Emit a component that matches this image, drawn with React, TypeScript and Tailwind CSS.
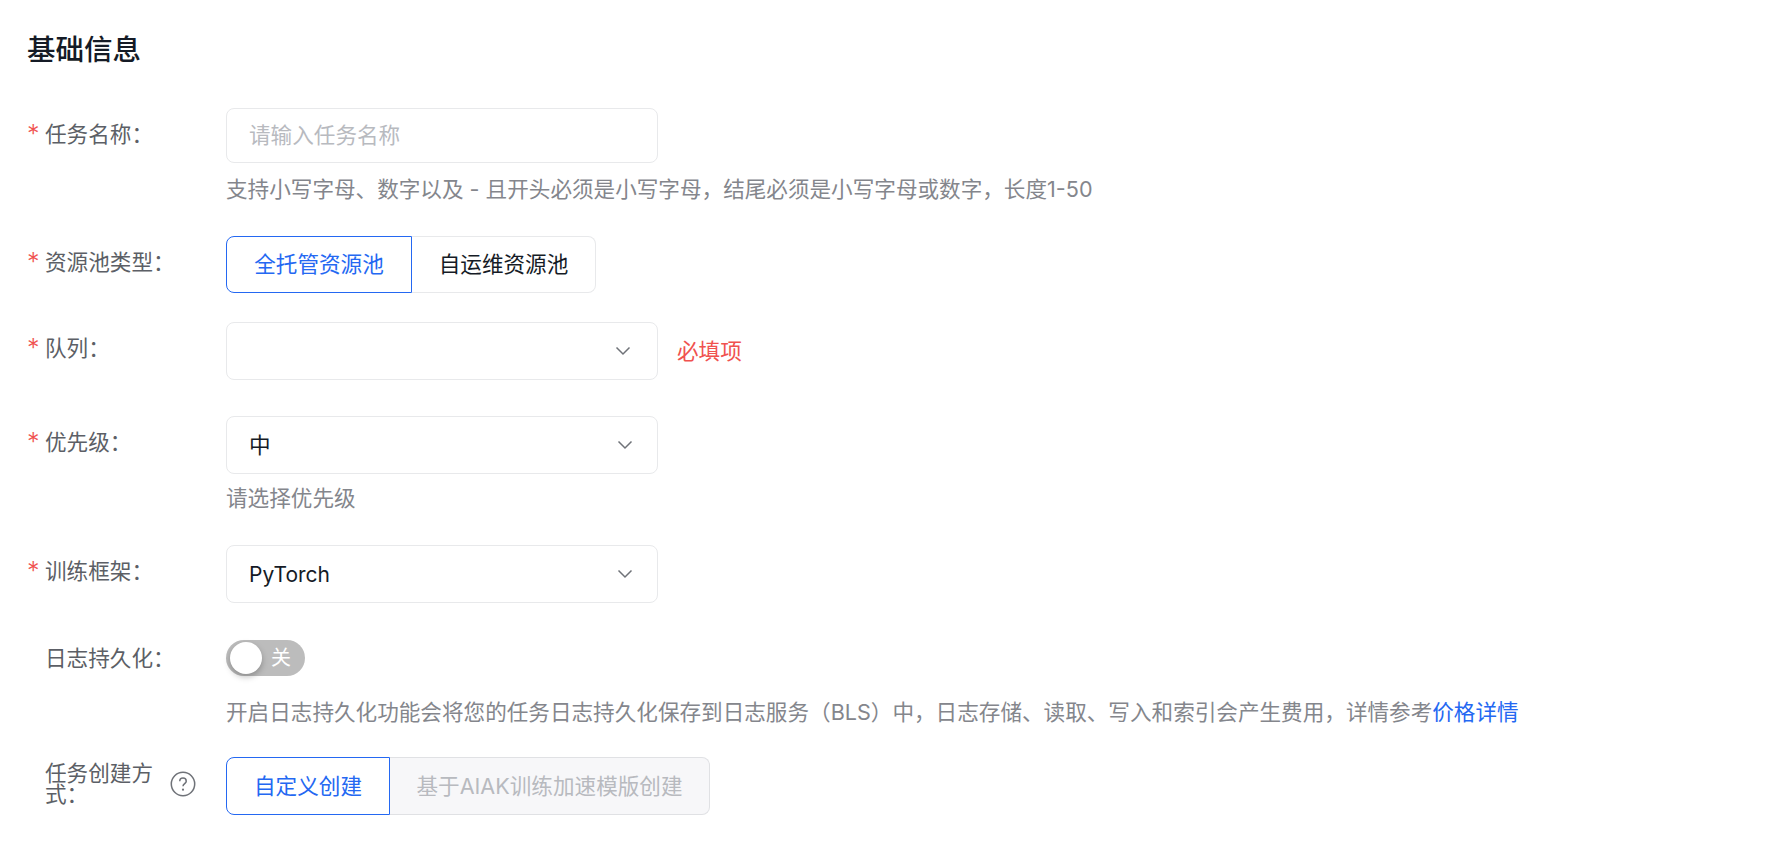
import React from 'react';

const FONT = "font-['Inter','Noto_Sans_CJK_SC',sans-serif]";

const Label: React.FC<{ text: string; required?: boolean; className?: string }> = ({ text, required, className }) => (
  <div className={`w-[199px] shrink-0 flex text-[#5c5f66] text-[21.6px] leading-[30px] ${className ?? 'pt-[11px]'}`}>
    <span className="w-[18px] shrink-0 text-[#f0524f] text-[25px] font-light">{required ? '*' : ''}</span>
    <span>{text}</span>
  </div>
);

const Chevron: React.FC<{ className?: string }> = ({ className }) => (
  <svg width="16" height="10" viewBox="0 0 16 10" fill="none" className={`shrink-0 ${className ?? ''}`}>
    <path d="M1.5 1.5 L8 8 L14.5 1.5" stroke="#6f7278" strokeWidth="1.5" />
  </svg>
);

const Select: React.FC<{ value?: string; chevronClass?: string; valueClass?: string }> = ({ value, chevronClass, valueClass }) => (
  <div className="w-[432px] h-[58px] border border-[#e8e9eb] rounded-lg bg-white flex items-center justify-between pl-[22px] pr-[24px] text-[#151b26] text-[21.6px]">
    <span className={valueClass}>{value}</span>
    <span className={chevronClass}><Chevron /></span>
  </div>
);

const Hint: React.FC<{ children: React.ReactNode; className?: string }> = ({ children, className }) => (
  <p className={`text-[#84868c] text-[21.6px] leading-[30px] whitespace-nowrap ${className ?? ''}`}>{children}</p>
);

const App: React.FC = () => {
  return (
    <div className={`${FONT} bg-white w-full h-[842px] overflow-hidden pl-[27px] pt-[30px]`}>
      <h2 className="text-[28.5px] leading-[40px] font-medium text-[#151b26] mb-[38px]">基础信息</h2>

      <div className="flex mb-[32px]">
        <Label text="任务名称：" required />
        <div>
          <div className="w-[432px] h-[55px] border border-[#e8e9eb] rounded-lg flex items-center px-[22px] text-[21.6px] text-[#b8babf]">请输入任务名称</div>
          <Hint className="mt-[11px]">支持小写字母、数字以及 - 且开头必须是小写字母，结尾必须是小写字母或数字，长度1-50</Hint>
        </div>
      </div>

      <div className="flex mb-[29px]">
        <Label text="资源池类型：" required />
        <div className="flex h-[57px] text-[21.6px]">
          <div className="w-[186px] border border-[#2468f2] rounded-l-lg text-[#2468f2] flex items-center justify-center">全托管资源池</div>
          <div className="w-[184px] border border-l-0 border-[#e8e9eb] rounded-r-lg text-[#151b26] flex items-center justify-center">自运维资源池</div>
        </div>
      </div>

      <div className="flex mb-[36px]">
        <Label text="队列：" required />
        <Select chevronClass="mr-[2px]" />
        <span className="ml-[19px] mt-[14px] text-[21.6px] leading-[30px] text-[#f0524f]">必填项</span>
      </div>

      <div className="flex mb-[32px]">
        <Label text="优先级：" required />
        <div>
          <Select value="中" />
          <Hint className="mt-[9px]">请选择优先级</Hint>
        </div>
      </div>

      <div className="flex mb-[37px]">
        <Label text="训练框架：" required />
        <Select value="PyTorch" valueClass="text-[21px] translate-y-px" />
      </div>

      <div className="flex mb-[30px]">
        <Label text="日志持久化：" className="pt-[3px]" />
        <div>
          <div className="w-[79px] h-[36px] rounded-full bg-[#bcbcbc] flex items-center justify-between pl-[4px] pr-[14px]">
            <span className="w-[32px] h-[32px] rounded-full bg-white shadow-[0_3px_6px_rgba(0,0,0,0.25)]" />
            <span className="text-white text-[20px]">关</span>
          </div>
          <Hint className="mt-[21px]">
            开启日志持久化功能会将您的任务日志持久化保存到日志服务（BLS）中，日志存储、读取、写入和索引会产生费用，详情参考<span className="text-[#2468f2]">价格详情</span>
          </Hint>
        </div>
      </div>

      <div className="flex">
        <div className="w-[199px] shrink-0 flex items-center text-[#5c5f66] text-[21.6px] leading-[21px] pl-[18px] pb-[5px]">
          <span className="w-[112px]">任务创建方式：</span>
          <svg width="26" height="26" viewBox="0 0 24 24" fill="none" className="ml-[13px] shrink-0">
            <circle cx="12" cy="12" r="10.8" stroke="#6f7278" strokeWidth="1.4" />
            <path d="M9 9.4a3 3 0 0 1 6 0c0 2-3 2.4-3 4.6" stroke="#6f7278" strokeWidth="1.4" />
            <circle cx="12" cy="17.2" r="1" fill="#6f7278" />
          </svg>
        </div>
        <div className="flex h-[58px] text-[21.6px]">
          <div className="w-[164px] border border-[#2468f2] rounded-l-lg text-[#2468f2] flex items-center justify-center">自定义创建</div>
          <div className="w-[320px] border border-l-0 border-[#e0e1e4] bg-[#f7f7f9] rounded-r-lg text-[#b8babf] flex items-center justify-center">基于AIAK训练加速模版创建</div>
        </div>
      </div>
    </div>
  );
};

export default App;
